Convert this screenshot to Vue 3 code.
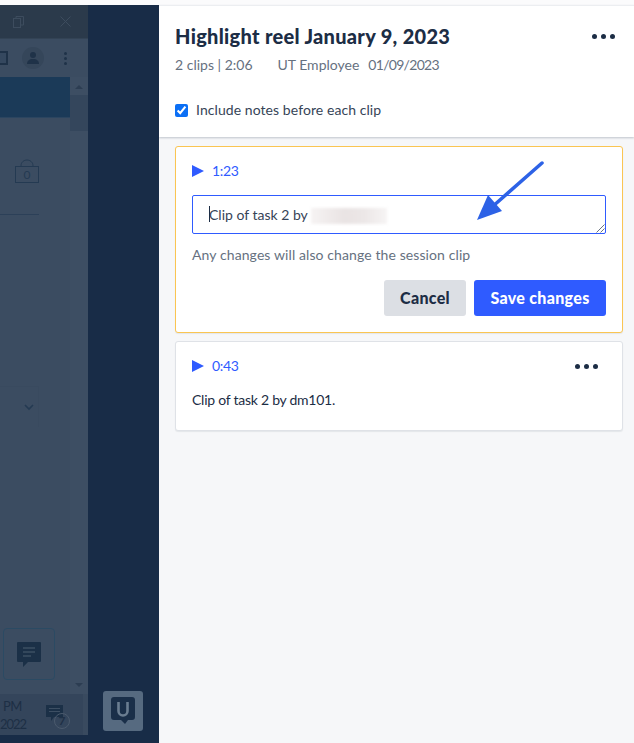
<template>
  <div class="screen">
    <div class="top-strip"></div>
    <div class="body">
      <div class="backdrop">
        <div class="app">
          <div class="titlebar">
            <svg class="win-icon restore" width="11" height="12" viewBox="0 0 11 12">
              <rect x="0.5" y="2.5" width="7" height="9" fill="none" stroke="#3d4c5e" />
              <path d="M3 2.500V.5h7.500v8.500H8" fill="none" stroke="#3d4c5e" />
            </svg>
            <svg class="win-icon close" width="11" height="11" viewBox="0 0 11 11">
              <path d="M.5.5l10 10M10.500.5l-10 10" stroke="#3d4c5e" />
            </svg>
          </div>
          <div class="toolbar">
            <span class="tool-box"></span>
            <span class="avatar">
              <svg width="14" height="14" viewBox="0 0 14 14">
                <circle cx="7" cy="4" r="3" fill="#1f3248" />
                <path d="M1 13c0-3 2-5 6-5s6 2 6 5z" fill="#1f3248" />
              </svg>
            </span>
            <span class="kebab"><i></i><i></i><i></i></span>
          </div>
          <div class="content">
            <div class="main">
              <div class="banner"></div>
              <div class="bag">
                <svg width="26" height="25" viewBox="0 0 26 25">
                  <path d="M7 7c0-8 12-8 12 0" fill="none" stroke="#243a52" />
                  <rect x="1.5" y="7.5" width="23" height="16" fill="none" stroke="#243a52" />
                </svg>
                <span>0</span>
              </div>
              <div class="rule"></div>
              <div class="select">
                <svg width="10" height="7" viewBox="0 0 10 7">
                  <path d="M1 1l4 4 4-4" fill="none" stroke="#243a52" stroke-width="1.6" />
                </svg>
              </div>
              <div class="chat-btn">
                <svg width="24" height="25" viewBox="0 0 24 25">
                  <path d="M1 0h22a1 1 0 0 1 1 1v18a1 1 0 0 1-1 1H11l-5 5v-5H1a1 1 0 0 1-1-1V1a1 1 0 0 1 1-1z" fill="#1b3047" />
                  <path d="M6 6h12M6 10h12M6 14h8" stroke="#3d4f63" stroke-width="1.5" />
                </svg>
              </div>
            </div>
            <div class="scrollbar">
              <span class="arrow up"></span>
              <span class="thumb"></span>
              <span class="arrow down"></span>
            </div>
          </div>
          <div class="taskbar">
            <div class="clock">
              <span class="clock-time">PM</span>
              <span class="clock-date">2022</span>
            </div>
            <div class="tray">
              <svg width="17" height="17" viewBox="0 0 17 17">
                <path d="M0 0h17v12H8l-3 4v-4H0z" fill="#1b3047" />
                <path d="M3 3.500h11M3 6.500h11" stroke="#3d4f63" />
              </svg>
              <span class="tray-badge">7</span>
            </div>
          </div>
        </div>
        <div class="shade">
          <div class="logo-tile">
            <svg width="24" height="28" viewBox="0 0 24 28">
              <path d="M3 0h18a3 3 0 0 1 3 3v17a3 3 0 0 1-3 3h-4l-3 4-4-4H3a3 3 0 0 1-3-3V3a3 3 0 0 1 3-3z" fill="#1a2f49" />
              <path d="M7.500 5v9a4.500 4.500 0 0 0 9 0V5" fill="none" stroke="#6a7d91" stroke-width="2.600" />
            </svg>
          </div>
        </div>
      </div>

      <div class="panel">
        <header class="head">
          <div class="title-row">
            <h1>Highlight reel January 9, 2023</h1>
            <span class="dots big"><i></i><i></i><i></i></span>
          </div>
          <div class="meta">
            <span>2 clips | 2:06</span>
            <span class="author">UT Employee</span>
            <span class="date">01/09/2023</span>
          </div>
          <label class="include">
            <input type="checkbox" checked />
            <span>Include notes before each clip</span>
          </label>
        </header>

        <div class="clips">
          <section class="clip editing">
            <div class="clip-top">
              <span class="play"></span>
              <span class="time">1:23</span>
            </div>
            <div class="field">
              <span class="caret"></span>
              <span>Clip of task 2 by</span>
              <span class="redact"></span>
              <svg class="grip" width="10" height="10" viewBox="0 0 10 10">
                <path d="M9.500 1.500l-8 8M9.500 5.500l-4 4" stroke="#5a6472" stroke-width="0.900" />
              </svg>
            </div>
            <p class="hint">Any changes will also change the session clip</p>
            <div class="actions">
              <button type="button" class="btn cancel">Cancel</button>
              <button type="button" class="btn save">Save changes</button>
            </div>
            <svg class="callout" width="68" height="60" viewBox="0 0 68 60">
              <path d="M66 2L16 46" stroke="#2d62e6" stroke-width="3.500" stroke-linecap="round" />
              <path d="M1 59l11-25 14 16z" fill="#2d62e6" />
            </svg>
          </section>

          <section class="clip">
            <div class="clip-top">
              <span class="play"></span>
              <span class="time">0:43</span>
              <span class="dots"><i></i><i></i><i></i></span>
            </div>
            <p class="note">Clip of task 2 by dm101.</p>
          </section>
        </div>
      </div>
    </div>
  </div>
</template>

<script setup>
</script>

<style>
html,
body {
  margin: 0;
  background: #f6f7f9;
}
</style>

<style scoped>
.screen {
  width: 634px;
  height: 743px;
  overflow: hidden;
  display: flex;
  flex-direction: column;
  font-family: Lato, 'Liberation Sans', sans-serif;
  color: #1c2d45;
}

.top-strip {
  height: 5px;
  background: #fbfbfc;
}

.body {
  flex: 1;
  display: flex;
  min-height: 0;
}

.backdrop {
  width: 159px;
  display: flex;
  background: #182c47;
}

.app {
  width: 88px;
  height: 730px;
  display: flex;
  flex-direction: column;
  background: #3b4c61;
}

.titlebar {
  height: 34px;
  flex: none;
  display: flex;
  align-items: center;
  background: #2b3a4b;
  border-bottom: 1px solid #334355;
  box-sizing: border-box;
}

.win-icon.restore {
  margin-left: 13px;
}

.win-icon.close {
  margin-left: 36px;
}

.toolbar {
  height: 38px;
  flex: none;
  display: flex;
  align-items: center;
}

.tool-box {
  width: 8px;
  height: 14px;
  box-sizing: border-box;
  border: 2px solid #1f3248;
  border-left: 0;
  background: #35485f;
}

.avatar {
  width: 22px;
  height: 22px;
  margin-left: 14px;
  border-radius: 50%;
  background: #35465a;
  display: flex;
  align-items: center;
  justify-content: center;
}

.kebab {
  margin-left: 20px;
  display: flex;
  flex-direction: column;
  gap: 2px;
}

.kebab i {
  width: 3px;
  height: 3px;
  border-radius: 50%;
  background: #1f3248;
}

.content {
  flex: 1;
  display: flex;
  min-height: 0;
}

.main {
  width: 70px;
  display: flex;
  flex-direction: column;
}

.banner {
  height: 41px;
  flex: none;
  background: #1b3a58;
  border-bottom: 1px solid #2b4560;
  box-sizing: border-box;
}

.bag {
  position: relative;
  width: 26px;
  height: 25px;
  margin: 41px 0 0 14px;
  flex: none;
}

.bag span {
  position: absolute;
  left: 0;
  right: 0;
  top: 9px;
  text-align: center;
  font-size: 12px;
  line-height: 13px;
  color: #243a52;
}

.rule {
  width: 39px;
  height: 1px;
  flex: none;
  margin-top: 30px;
  background: #2c4058;
}

.select {
  width: 39px;
  height: 41px;
  flex: none;
  margin-top: 171px;
  box-sizing: border-box;
  border-top: 1px solid #394a5f;
  border-right: 1px solid #394a5f;
  padding: 17px 0 0 24px;
}

.select svg {
  display: block;
}

.chat-btn {
  width: 52px;
  height: 52px;
  flex: none;
  margin: 201px 0 0 3px;
  box-sizing: border-box;
  border: 1px solid #2b4a63;
  border-radius: 4px;
  display: flex;
  align-items: center;
  justify-content: center;
}

.scrollbar {
  flex: 1;
  position: relative;
  display: flex;
  flex-direction: column;
  align-items: center;
  background: #3d4e63;
}

.thumb {
  width: 100%;
  height: 36px;
  margin-top: 6px;
  background: #34465c;
}

.arrow {
  width: 0;
  height: 0;
  border-left: 4px solid transparent;
  border-right: 4px solid transparent;
}

.arrow.up {
  margin-top: 8px;
  border-bottom: 4px solid #2c3d52;
}

.arrow.down {
  position: absolute;
  bottom: 7px;
  border-top: 4px solid #2c3d52;
}

.taskbar {
  height: 41px;
  flex: none;
  display: flex;
  background: #34455b;
  color: #1f3046;
  box-sizing: border-box;
  border-right: 5px solid #394a5f;
}

.clock {
  width: 27px;
  padding-top: 3px;
  font-size: 13px;
  line-height: 18px;
  box-sizing: border-box;
  color: #1d2f45;
  white-space: nowrap;
}

.clock-time {
  display: block;
  padding-left: 3px;
  letter-spacing: -0.5px;
}

.clock-date {
  display: block;
  letter-spacing: -1px;
}

.tray {
  position: relative;
  margin: 11px 0 0 19px;
}

.tray-badge {
  position: absolute;
  left: 8px;
  top: 8px;
  width: 16px;
  height: 16px;
  border: 1px solid #4b5a6d;
  border-radius: 50%;
  box-sizing: border-box;
  font-size: 12px;
  line-height: 14px;
  text-align: center;
  font-weight: 700;
}

.shade {
  flex: 1;
  position: relative;
}

.logo-tile {
  position: absolute;
  left: 15px;
  top: 686px;
  width: 40px;
  height: 40px;
  border-radius: 3px;
  background: #566a80;
  display: flex;
  align-items: center;
  justify-content: center;
}

.panel {
  flex: 1;
  min-width: 0;
  display: flex;
  flex-direction: column;
  background: #f6f7f9;
}

.head {
  height: 132px;
  flex: none;
  box-sizing: border-box;
  padding: 15px 16px 0;
  background: #fff;
  border-top: 1px solid #eceef1;
  box-shadow: 0 1px 2px rgba(28, 45, 69, 0.25);
  position: relative;
}

.title-row {
  display: flex;
  justify-content: space-between;
  align-items: center;
}

h1 {
  margin: 0;
  font-size: 20px;
  line-height: 30px;
  font-weight: 900;
  letter-spacing: 0.3px;
  color: #1c2d45;
}

.meta {
  display: flex;
  margin-top: 5px;
  font-size: 14px;
  line-height: 18px;
  color: #66717f;
}

.author {
  margin: 0 9px 0 25px;
}

.date {
  letter-spacing: -0.7px;
}

.include {
  display: flex;
  align-items: center;
  margin-top: 27px;
  font-size: 14px;
  line-height: 18px;
  letter-spacing: 0.07px;
  color: #364457;
}

.include input {
  width: 13px;
  height: 13px;
  margin: 0 8px 0 0;
  accent-color: #0b6ff5;
}

.dots {
  display: flex;
  gap: 4px;
  margin-left: auto;
}

.dots i {
  width: 5px;
  height: 5px;
  border-radius: 50%;
  background: #1c2d45;
}

.dots.big {
  margin-right: 3px;
}

.clips {
  padding: 9px 11px 0 16px;
  display: flex;
  flex-direction: column;
  gap: 8px;
}

.clip {
  position: relative;
  padding: 15px 16px 0;
  background: #fff;
  border: 1px solid #dfe2e7;
  border-radius: 3px;
  box-sizing: border-box;
  height: 90px;
  box-shadow: 0 1px 1px rgba(28, 45, 69, 0.08);
}

.clip.editing {
  height: 187px;
  border-color: #fac552;
}

.clip-top {
  display: flex;
  align-items: center;
  height: 18px;
}

.play {
  width: 0;
  height: 0;
  border-left: 12px solid #2f5bff;
  border-top: 6px solid transparent;
  border-bottom: 6px solid transparent;
}

.time {
  margin-left: 8px;
  font-size: 14px;
  line-height: 18px;
  letter-spacing: -0.3px;
  color: #2f5bff;
}

.clip-top .dots {
  margin-right: 8px;
}

.field {
  position: relative;
  height: 39px;
  margin-top: 15px;
  box-sizing: border-box;
  border: 1px solid #2f5bff;
  border-radius: 2px;
  padding-left: 16px;
  display: flex;
  align-items: center;
  font-size: 14px;
  color: #364457;
}

.caret {
  position: absolute;
  left: 16px;
  top: 10px;
  width: 1px;
  height: 16px;
  background: #1c2d45;
}

.redact {
  width: 76px;
  height: 16px;
  margin: 3px 0 0 3px;
  background: linear-gradient(90deg, #f6f3f3, #e9e3e3 45%, #ece7e7 70%, #f6f4f4);
  filter: blur(1.5px);
}

.grip {
  position: absolute;
  right: 0;
  bottom: 0;
}

.hint {
  margin: 12px 0 0;
  font-size: 14px;
  line-height: 18px;
  letter-spacing: 0.1px;
  color: #66717f;
}

.actions {
  display: flex;
  justify-content: flex-end;
  gap: 8px;
  margin-top: 16px;
}

.btn {
  height: 36px;
  border: 0;
  border-radius: 3px;
  font-family: inherit;
  font-size: 16px;
  font-weight: 900;
  letter-spacing: 0.3px;
  padding: 0 0 2px;
}

.cancel {
  width: 82px;
  background: #dcdfe4;
  color: #1c2d45;
}

.save {
  width: 132px;
  background: #2f5bff;
  color: #fff;
}

.callout {
  position: absolute;
  left: 300px;
  top: 14px;
}

.note {
  margin: 16px 0 0;
  font-size: 14px;
  line-height: 18px;
  letter-spacing: -0.25px;
  color: #1c2d45;
}
</style>
